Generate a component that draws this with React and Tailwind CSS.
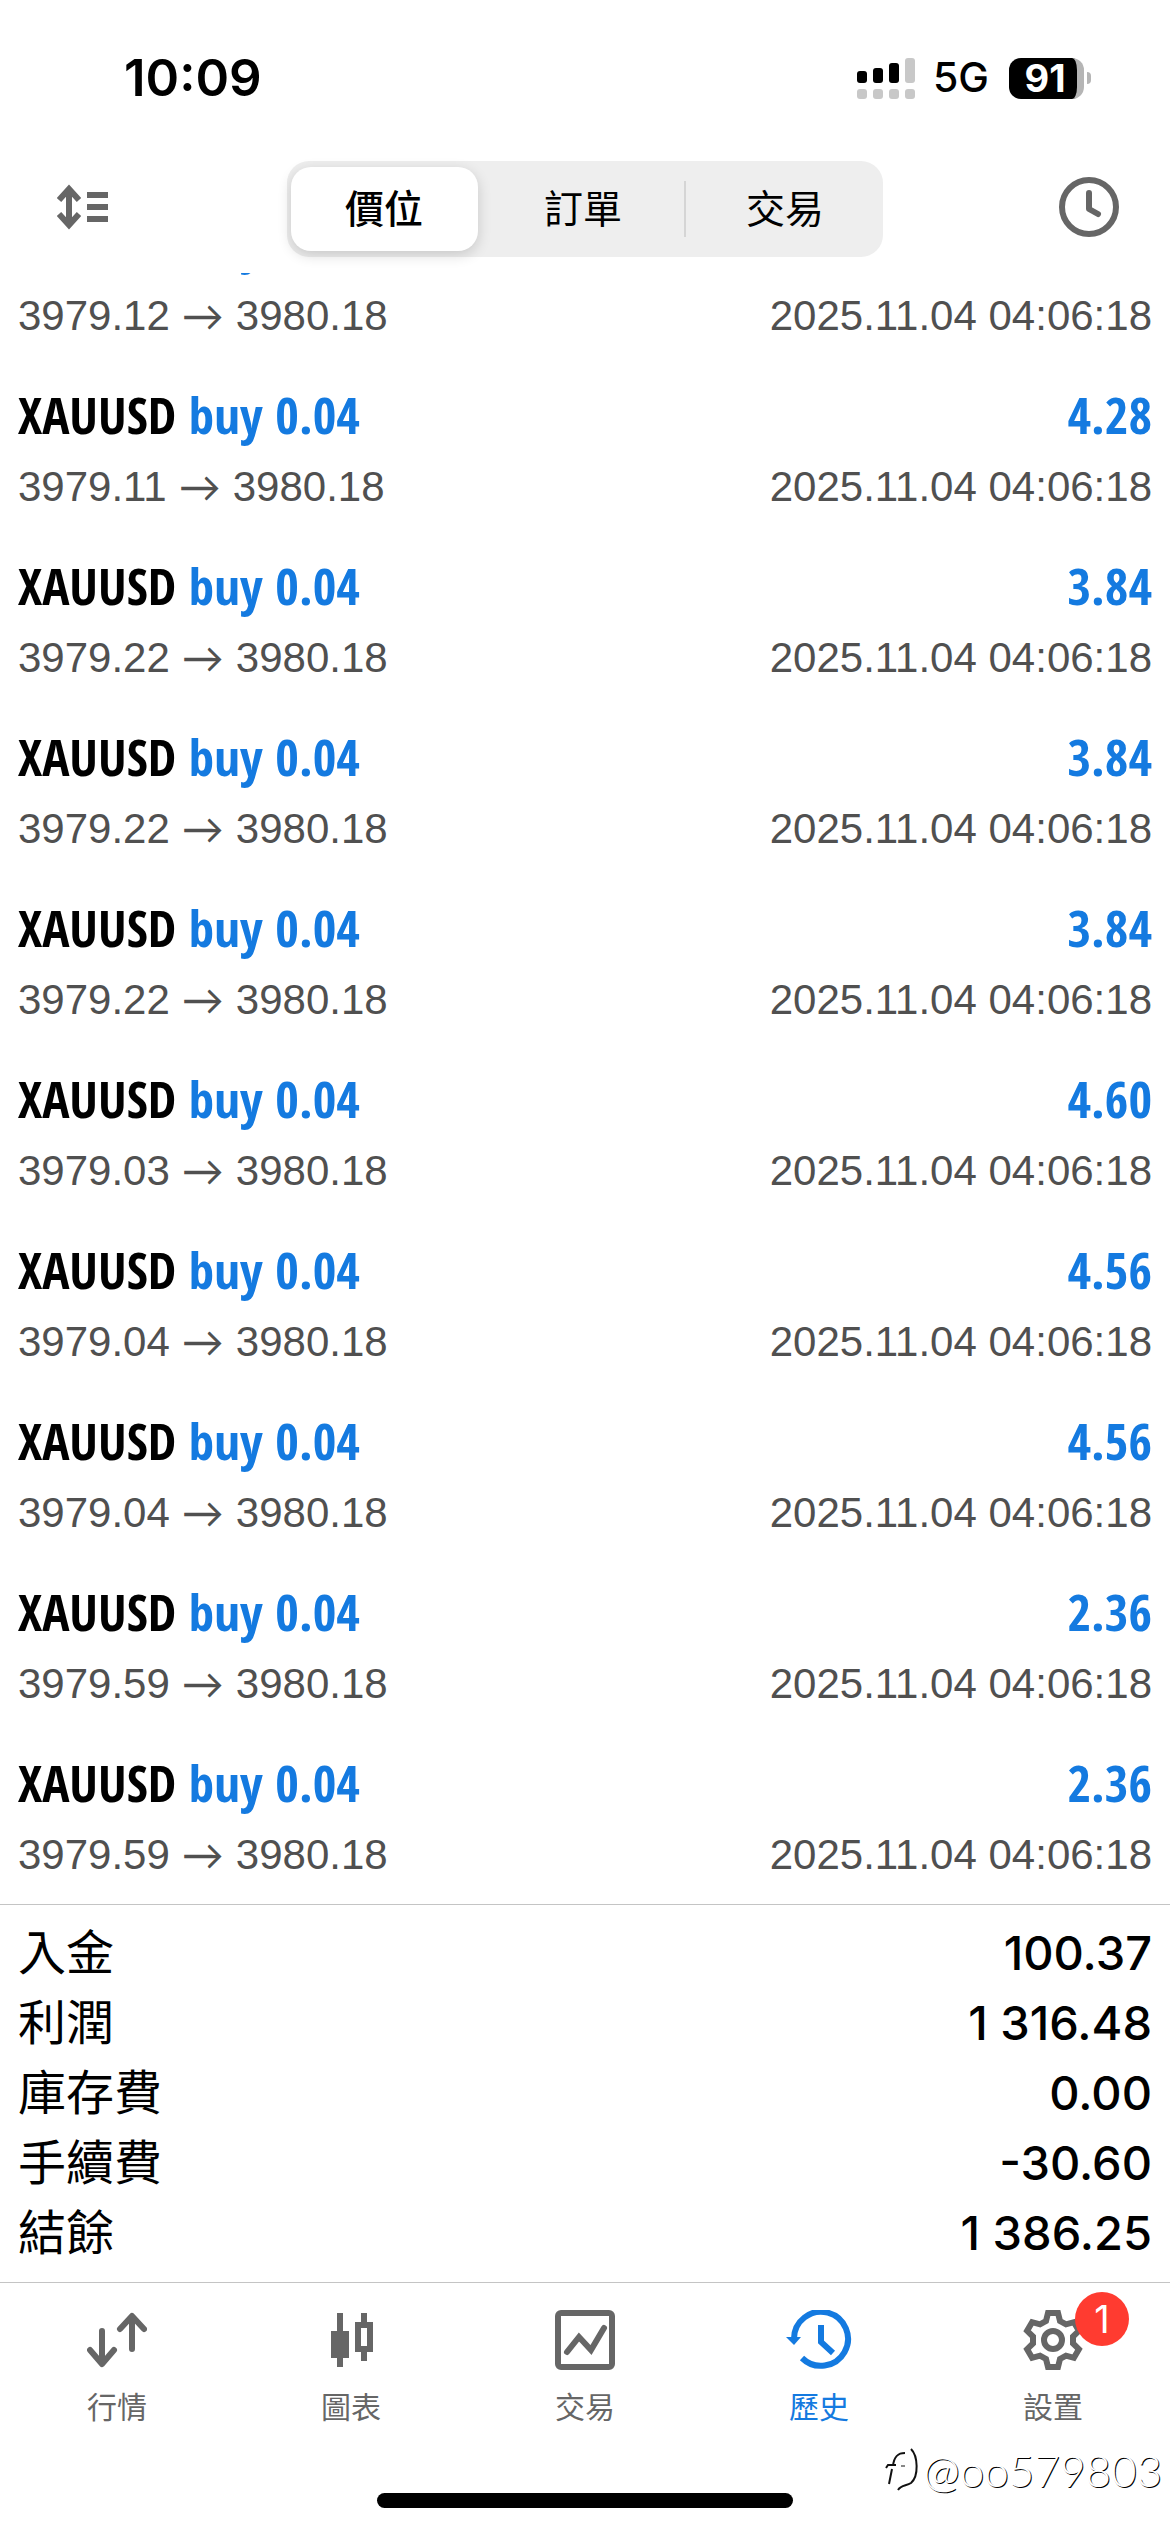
import React, { useState } from 'react'

const deals = [
  { id: 1, open: '3979.12', profit: '4.24' },
  { id: 2, open: '3979.11', profit: '4.28' },
  { id: 3, open: '3979.22', profit: '3.84' },
  { id: 4, open: '3979.22', profit: '3.84' },
  { id: 5, open: '3979.22', profit: '3.84' },
  { id: 6, open: '3979.03', profit: '4.60' },
  { id: 7, open: '3979.04', profit: '4.56' },
  { id: 8, open: '3979.04', profit: '4.56' },
  { id: 9, open: '3979.59', profit: '2.36' },
  { id: 10, open: '3979.59', profit: '2.36' },
]

const summary = [
  ['入金', '100.37'],
  ['利潤', '1 316.48'],
  ['庫存費', '0.00'],
  ['手續費', '-30.60'],
  ['結餘', '1 386.25'],
]

const QuotesIcon = () => (
  <svg width="60" height="60" viewBox="0 0 60 60" fill="none" stroke="currentColor" strokeWidth="6" strokeLinecap="round" strokeLinejoin="round">
    <path d="M15 21V53M3 40L15 54L27 40" />
    <path d="M45 39V7M33 19L45 6L57 19" />
  </svg>
)

const ChartsIcon = () => (
  <svg width="60" height="60" viewBox="0 0 60 60" fill="currentColor">
    <path d="M16 3h6v18h6v27h-6v9h-6v-9h-6V21h6z" />
    <path fillRule="evenodd" d="M40 3h6v9h6v30h-6v9h-6v-9h-6V12h6zM40 18v18h6V18z" />
  </svg>
)

const TradeIcon = () => (
  <svg width="60" height="60" viewBox="0 0 60 60" fill="none" stroke="currentColor" strokeWidth="6">
    <rect x="3" y="3" width="54" height="54" rx="3" />
    <path d="M12 42L24 27L36 40L49 18" strokeWidth="6" strokeLinecap="round" />
  </svg>
)

const HistoryIcon = () => (
  <svg width="66" height="60" viewBox="0 0 66 60" fill="none" stroke="currentColor" strokeWidth="6">
    <path d="M8 29A27 27 0 1 1 16 48" />
    <path d="M0 27H15L8 35Z" fill="currentColor" stroke="none" />
    <path d="M35 15V32L47 43" />
  </svg>
)

// six teeth, each one is the same four points turned by 60 degrees
const gearPoints = [0, 60, 120, 180, 240, 300]
  .flatMap((deg) => {
    const a = (deg * Math.PI) / 180
    return [[-7, -19], [-5, -27], [5, -27], [7, -19]].map(([x, y]) => [
      30 + x * Math.cos(a) - y * Math.sin(a),
      30 + x * Math.sin(a) + y * Math.cos(a),
    ])
  })
  .map((p) => p.map((n) => n.toFixed(1)).join(','))
  .join(' ')

const SettingsIcon = () => (
  <svg width="60" height="60" viewBox="0 0 60 60" fill="none" stroke="currentColor" strokeWidth="6">
    <polygon points={gearPoints} />
    <circle cx="30" cy="30" r="9" />
  </svg>
)

const navItems = [
  { label: '行情', Icon: QuotesIcon },
  { label: '圖表', Icon: ChartsIcon },
  { label: '交易', Icon: TradeIcon },
  { label: '歷史', Icon: HistoryIcon, active: true },
  { label: '設置', Icon: SettingsIcon, badge: 1 },
]

const StatusBar = () => (
  <div className="flex h-[156px] shrink-0 items-center justify-between pl-[124px] pr-[79px] text-black">
    <span className="text-[51px] font-semibold">10:09</span>
    <div className="flex items-center">
      <svg width="58" height="41" viewBox="0 0 58 41" aria-hidden="true">
        <g fill="#000">
          <rect x="0" y="13" width="10" height="12" rx="3" />
          <rect x="16" y="10" width="10" height="15" rx="3" />
          <rect x="32" y="5" width="10" height="20" rx="3" />
        </g>
        <g fill="#c8c8c8">
          <rect x="48" y="0" width="10" height="25" rx="3" />
          <rect x="0" y="31" width="10" height="10" rx="3" />
          <rect x="16" y="31" width="10" height="10" rx="3" />
          <rect x="32" y="31" width="10" height="10" rx="3" />
          <rect x="48" y="31" width="10" height="10" rx="3" />
        </g>
      </svg>
      <span className="ml-[18px] text-[41px] font-medium">5G</span>
      <div className="ml-5 flex h-[41px] w-[75px] items-center justify-center rounded-[12px] border-r-[7px] border-[#b5b5b5] bg-black pl-1">
        <span className="text-[38px] leading-[41px] font-bold text-white">91</span>
      </div>
      <div className="ml-[3px] h-3 w-1 rounded-r-full bg-[#b5b5b5]" />
    </div>
  </div>
)

const Header = () => {
  const [tab, setTab] = useState('價位')

  return (
    <header className="grid shrink-0 grid-cols-[1fr_51%_1fr] items-center pt-[5px] pb-4 text-[#666]">
      <button type="button" aria-label="Sort" className="mb-1 ml-[57px] justify-self-start">
        <svg width="51" height="46" viewBox="0 0 51 46" fill="none" stroke="currentColor" strokeWidth="6">
          <path d="M12 5V41M2 16L12 5L22 16M2 30L12 41L22 30" />
          <path d="M30 11H51M30 23H51M30 35H51" />
        </svg>
      </button>
      <div className="grid h-24 grid-cols-3 items-center rounded-[22px] bg-[#eee] text-[39px] text-black">
        {['價位', '訂單', '交易'].map((name, i) => (
          <div key={name} className={i === 2 ? 'flex items-center' : 'flex items-center pl-1 pr-2'}>
            {i === 2 && <div className="h-14 w-[2px] bg-[#d5d5d5]" />}
            <button
              type="button"
              onClick={() => setTab(name)}
              className={
                tab === name
                  ? 'h-[84px] flex-1 rounded-[20px] bg-white font-medium shadow-[0_4px_14px_rgba(0,0,0,0.16)]'
                  : 'h-[84px] flex-1'
              }
            >
              {name}
            </button>
          </div>
        ))}
      </div>
      <button type="button" aria-label="Period" className="mr-[51px] mb-1 justify-self-end">
        <svg width="60" height="60" viewBox="0 0 60 60" fill="none" stroke="currentColor" strokeWidth="6" strokeLinecap="round" strokeLinejoin="round">
          <circle cx="30" cy="30" r="27" />
          <path d="M30 16V32L39 37" />
        </svg>
      </button>
    </header>
  )
}

const Deal = ({ deal }) => (
  <li className="shrink-0 px-[18px] pt-[11px] pb-4">
    <div className="flex justify-between font-['Open_Sans_Condensed','Roboto_Condensed',sans-serif] text-[51px] leading-[77px] font-bold text-[#147ae0]">
      <span>
        <span className="text-black">XAUUSD</span> buy 0.04
      </span>
      <span>{deal.profit}</span>
    </div>
    <div className="flex justify-between font-['Liberation_Sans',sans-serif] text-[42px] leading-[67px] text-[#505050]">
      <span className="flex gap-3">
        <span>{deal.open}</span>
        <span className="font-['Lato',sans-serif]">→</span>
        <span>3980.18</span>
      </span>
      <span>2025.11.04 04:06:18</span>
    </div>
  </li>
)

const BottomNav = () => (
  <nav className="relative shrink-0 border-t border-[#c4c4c4] pt-[27px] pb-6">
    <div className="grid grid-cols-5">
      {navItems.map(({ label, Icon, active, badge }) => (
        <a
          key={label}
          href="#"
          className={`flex flex-col items-center gap-[17px] text-[30px] leading-10 ${active ? 'text-[#147ae0]' : 'text-[#666]'}`}
        >
          <span className="relative">
            <Icon />
            {badge && (
              <span className="absolute -top-[18px] left-[52px] flex size-[54px] items-center justify-center rounded-full bg-[#ff3b30] text-[38px] text-white">
                {badge}
              </span>
            )}
          </span>
          {label}
        </a>
      ))}
    </div>
    <div className="mx-auto mt-[66px] h-[15px] w-[416px] rounded-full bg-black" />
    <div className="absolute right-2 bottom-9 flex items-center gap-1 font-['Lato',sans-serif] text-[44px] leading-[52px] font-light text-white [text-shadow:1px_1px_0_#000]">
      <svg width="34" height="44" viewBox="0 0 34 44" fill="none" stroke="#111" strokeWidth="2" aria-hidden="true">
        <path d="M20 5C13 5 9 8 8 18M1 20L3 17H11M7 21L4 36" />
        <path d="M26 1C33 8 34 28 26 35C21 38 16 37 13 42" />
        <path d="M16 18H20" strokeWidth="1" />
      </svg>
      @oo579803
    </div>
  </nav>
)

const App = () => {
  return (
    <div className="flex h-screen flex-col overflow-hidden bg-white font-['Inter','Noto_Sans_CJK_TC',sans-serif]">
      <StatusBar />
      <Header />
      <ul className="flex min-h-0 flex-1 flex-col justify-end overflow-hidden">
        {deals.map((deal) => (
          <Deal key={deal.id} deal={deal} />
        ))}
      </ul>
      <dl className="shrink-0 border-t border-[#c4c4c4] px-[18px] pt-[13px] pb-[14px] text-black">
        {summary.map(([name, value]) => (
          <div key={name} className="flex h-[70px] items-center justify-between">
            <dt className="text-[48px]">{name}</dt>
            <dd className="text-[47px] font-medium">{value}</dd>
          </div>
        ))}
      </dl>
      <BottomNav />
    </div>
  )
}

export default App
